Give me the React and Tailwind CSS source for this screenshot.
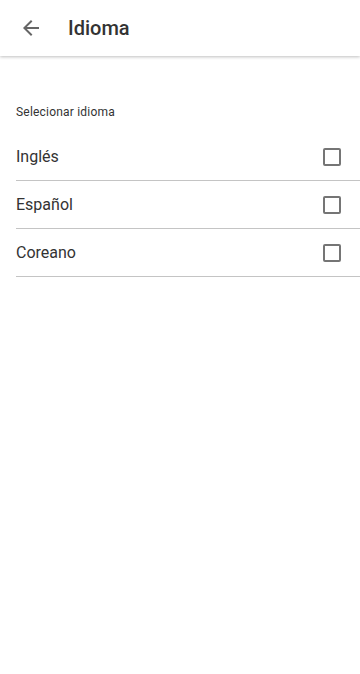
export default function App() {
  const langs = ['Inglés', 'Español', 'Coreano'];
  return (
    <div className="min-h-[674px] bg-white font-['Roboto',sans-serif] text-[#333333]">
      <header className="h-14 flex items-center bg-white shadow-[0_1px_3px_rgba(0,0,0,0.25)]">
        <svg className="ml-[19px] w-6 h-6 fill-[#666666]" viewBox="0 0 24 24">
          <path d="M20 11H7.83l5.59-5.59L12 4l-8 8 8 8 1.41-1.41L7.83 13H20v-2z" />
        </svg>
        <h1 className="ml-[25px] text-[20px] font-medium leading-none text-[#333333]">Idioma</h1>
      </header>
      <main className="pt-[48px] pl-4">
        <p className="text-[12px] leading-4 tracking-[0.2px] text-[#333333]">Selecionar idioma</p>
        <ul className="mt-[13px]">
          {langs.map((l) => (
            <li key={l} className="h-12 flex items-center justify-between border-b border-[#c4c4c4]">
              <span className="text-[16px]">{l}</span>
              <span className="mr-[19px] w-[18px] h-[18px] rounded-[2px] border-2 border-[#757575]" />
            </li>
          ))}
        </ul>
      </main>
    </div>
  );
}
